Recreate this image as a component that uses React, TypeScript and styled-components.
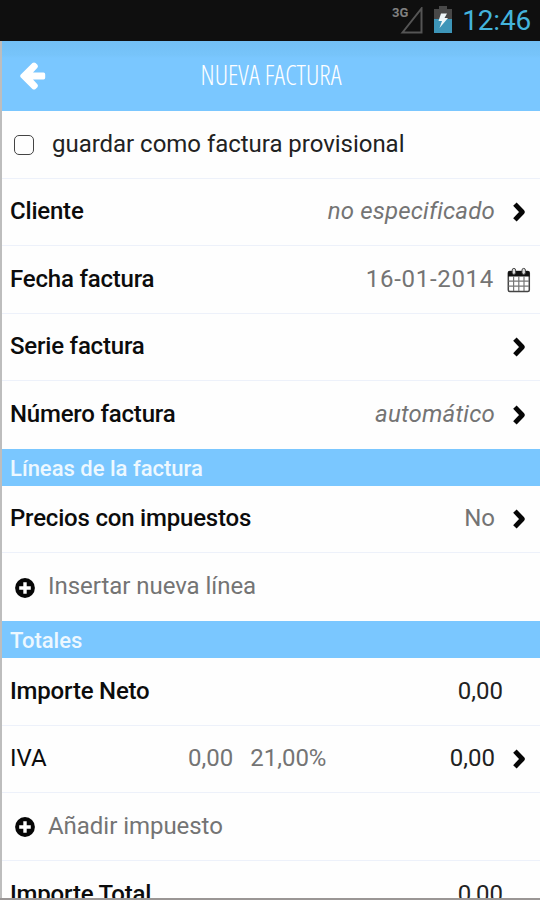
import React from "react";
import styled, { createGlobalStyle, css } from "styled-components";

const GlobalStyle = createGlobalStyle`
  * { box-sizing: border-box; }
  body { margin: 0; background: #fefefe; }
`;

const Screen = styled.div`
  display: flex;
  flex-direction: column;
  width: 540px;
  height: 900px;
  overflow: hidden;
  background: #fefefe;
  border-bottom: 2px solid #9a9695;
  font-family: Roboto, sans-serif;
  font-size: 24px;
  color: #0c0c0c;
`;

const StatusBar = styled.div`
  display: flex;
  flex: none;
  align-items: center;
  justify-content: flex-end;
  height: 41px;
  padding-right: 9px;
  background: #0f0f0f;
`;

const Clock = styled.span`
  font-size: 28px;
  line-height: 40px;
  letter-spacing: -0.2px;
  color: #44b4dc;
  margin-left: 10px;
`;

const Body = styled.div`
  display: flex;
  flex: 1;
  flex-direction: column;
  min-height: 0;
  overflow: hidden;
  border-left: 2px solid #bdbdbd;
`;

const Header = styled.header`
  display: grid;
  grid-template-columns: 60px 1fr 60px;
  flex: none;
  align-items: center;
  height: 70px;
  background: linear-gradient(#73c0f5 0, #77c4fa 14px, #7ac7ff 17px);
`;

const BackButton = styled.button`
  display: flex;
  padding: 0 0 0 17px;
  border: 0;
  background: none;
`;

const Title = styled.h1`
  margin: 0 0 2px;
  font: 300 26.7px/66px "Open Sans", sans-serif;
  font-stretch: 75%;
  text-align: center;
  color: #fff;
`;

const Row = styled.div<{ $height: number; $last?: boolean }>`
  display: flex;
  flex: none;
  align-items: center;
  height: ${(p) => p.$height}px;
  padding: 0 13px 2px 8px;
  white-space: nowrap;
  ${(p) =>
    !p.$last &&
    css`
      border-bottom: 1px solid #edf1fa;
    `}
`;

const Section = styled.h2<{ $height: number }>`
  flex: none;
  height: ${(p) => p.$height}px;
  margin: 0;
  padding-left: 8px;
  font-size: 22px;
  font-weight: 500;
  line-height: 40px;
  color: #edf8ff;
  background: #7ac7ff;
`;

const Label = styled.span`
  flex: 1;
  font-weight: 500;
  letter-spacing: -0.2px;
`;

const Value = styled.span<{ $italic?: boolean; $dark?: boolean; $gap?: number; $tracking?: number }>`
  margin-right: ${(p) => p.$gap ?? 16}px;
  font-style: ${(p) => (p.$italic ? "italic" : "normal")};
  letter-spacing: ${(p) => p.$tracking ?? 0}px;
  color: ${(p) => (p.$dark ? "#222" : "#747474")};
`;

const TaxLabel = styled.span`
  width: 178px;
`;

const TaxDetail = styled.span`
  display: flex;
  flex: 1;
  gap: 17px;
  color: #747474;
`;

const CheckBox = styled.span`
  width: 20px;
  height: 20px;
  margin: 2px 18px 0 4px;
  border: 1.5px solid #444;
  border-radius: 5px;
`;

const OptionText = styled.span`
  color: #222;
  letter-spacing: -0.03px;
`;

const ActionText = styled.span`
  margin-left: 13px;
  letter-spacing: -0.04px;
  color: #747474;
`;

const Icon = styled.svg<{ $top?: number; $left?: number; $right?: number }>`
  display: block;
  flex: none;
  margin-top: ${(p) => p.$top ?? 0}px;
  margin-left: ${(p) => p.$left ?? 0}px;
  margin-right: ${(p) => p.$right ?? 0}px;
`;

const Chevron = () => (
  <Icon width="16" height="22" viewBox="0 0 16 22" $top={1}>
    <path
      d="M3.9 3.2L11.4 11L3.9 18.8"
      fill="none"
      stroke="#060606"
      strokeWidth="4.8"
      strokeLinejoin="round"
    />
  </Icon>
);

const Plus = () => (
  <Icon width="20" height="20" viewBox="0 0 20 20" $top={3} $left={5}>
    <circle cx="10" cy="10" r="9.9" fill="#060606" />
    <path d="M10 4.2V15.8M4.2 10H15.8" stroke="#fff" strokeWidth="3.4" />
  </Icon>
);

const Calendar = () => (
  <Icon width="24" height="26" viewBox="0 0 24 26" $top={3} $right={-4}>
    <rect x="1.3" y="4.5" width="21" height="20" rx="1.5" fill="#fff" stroke="#444" strokeWidth="1.5" />
    <path d="M1 9.5V6Q1 4 3 4H20.6Q22.6 4 22.6 6V9.5Z" fill="#111" />
    <path d="M6.6 9V24M11.8 9V24M17 9V24M1.5 14.2H22M1.5 19.2H22" stroke="#777" strokeWidth="1.2" />
    <rect x="5.2" y="1.4" width="3.4" height="6" rx="1.7" fill="#ddd" stroke="#444" />
    <rect x="15" y="1.4" width="3.4" height="6" rx="1.7" fill="#ddd" stroke="#444" />
  </Icon>
);

const BackArrow = () => (
  <Icon width="28" height="30" viewBox="0 0 28 30">
    <path
      d="M1.6 13.8L13.4 2Q15 .8 16.6 2L18.4 3.8Q19.6 5.2 18.4 6.8L14 11.5H24.6Q26.2 11.5 26.2 13.2V16.8Q26.2 18.5 24.6 18.5H14L18.4 23.2Q19.6 24.8 18.4 26.2L16.6 28Q15 29.2 13.4 28L1.6 16.2Q.6 15 1.6 13.8Z"
      fill="#fff"
    />
  </Icon>
);

const SignalText = styled.span`
  align-self: flex-start;
  margin: 5px -9px 0 0;
  font-size: 13px;
  font-weight: 700;
  line-height: 15px;
  color: #808080;
`;

const Signal = () => (
  <Icon width="25" height="28" viewBox="0 0 25 28">
    <path d="M3.5 25.5L22.5 1.5V25.5Z" fill="none" stroke="#555" strokeWidth="2" />
  </Icon>
);

const Battery = () => (
  <Icon width="18" height="28" viewBox="0 0 18 28" $left={10} $top={-2}>
    <path d="M0 3H5V0H13V3H18V13H0Z" fill="#484848" />
    <path d="M0 13H18V27H0Z" fill="#3d95b8" />
    <path d="M7 7.5H13L10.5 12H14L5.5 22L8 15H4.5Z" fill="#eef6f8" />
  </Icon>
);

export default function App() {
  return (
    <>
      <GlobalStyle />
      <Screen>
        <StatusBar>
          <SignalText>3G</SignalText>
          <Signal />
          <Battery />
          <Clock>12:46</Clock>
        </StatusBar>
        <Body>
          <Header>
            <BackButton aria-label="Atrás">
              <BackArrow />
            </BackButton>
            <Title>NUEVA FACTURA</Title>
          </Header>
          <Row $height={68}>
            <CheckBox />
            <OptionText>guardar como factura provisional</OptionText>
          </Row>
          <Row $height={67}>
            <Label>Cliente</Label>
            <Value $italic $tracking={0.18}>no especificado</Value>
            <Chevron />
          </Row>
          <Row $height={68}>
            <Label>Fecha factura</Label>
            <Value $gap={13} $tracking={0.7}>16-01-2014</Value>
            <Calendar />
          </Row>
          <Row $height={67}>
            <Label>Serie factura</Label>
            <Chevron />
          </Row>
          <Row $height={68} $last>
            <Label>Número factura</Label>
            <Value $italic $tracking={0.2}>automático</Value>
            <Chevron />
          </Row>
          <Section $height={37}>Líneas de la factura</Section>
          <Row $height={67}>
            <Label>Precios con impuestos</Label>
            <Value>No</Value>
            <Chevron />
          </Row>
          <Row $height={68} $last>
            <Plus />
            <ActionText>Insertar nueva línea</ActionText>
          </Row>
          <Section $height={37}>Totales</Section>
          <Row $height={68}>
            <Label>Importe Neto</Label>
            <Value $dark $gap={24}>0,00</Value>
          </Row>
          <Row $height={67}>
            <TaxLabel>IVA</TaxLabel>
            <TaxDetail>
              <span>0,00</span>
              <span>21,00%</span>
            </TaxDetail>
            <Value $dark>0,00</Value>
            <Chevron />
          </Row>
          <Row $height={68}>
            <Plus />
            <ActionText>Añadir impuesto</ActionText>
          </Row>
          <Row $height={67} $last>
            <Label>Importe Total</Label>
            <Value $dark $gap={24}>0,00</Value>
          </Row>
        </Body>
      </Screen>
    </>
  );
}
